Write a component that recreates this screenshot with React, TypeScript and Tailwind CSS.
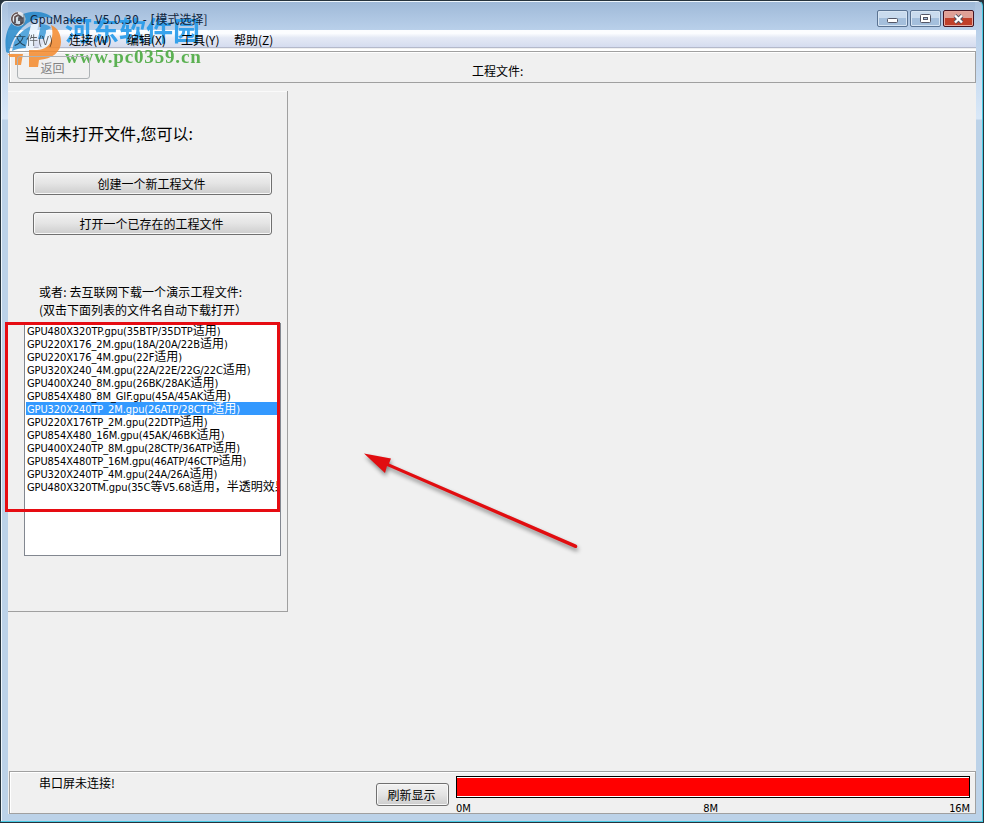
import React from "react";

const files = [
  "GPU480X320TP.gpu(35BTP/35DTP适用)",
  "GPU220X176_2M.gpu(18A/20A/22B适用)",
  "GPU220X176_4M.gpu(22F适用)",
  "GPU320X240_4M.gpu(22A/22E/22G/22C适用)",
  "GPU400X240_8M.gpu(26BK/28AK适用)",
  "GPU854X480_8M_GIF.gpu(45A/45AK适用)",
  "GPU320X240TP_2M.gpu(26ATP/28CTP适用)",
  "GPU220X176TP_2M.gpu(22DTP适用)",
  "GPU854X480_16M.gpu(45AK/46BK适用)",
  "GPU400X240TP_8M.gpu(28CTP/36ATP适用)",
  "GPU854X480TP_16M.gpu(46ATP/46CTP适用)",
  "GPU320X240TP_4M.gpu(24A/26A适用)",
  "GPU480X320TM.gpu(35C等V5.68适用，半透明效果)",
];

const menus = [
  { label: "文件(V)", width: "w-[55px]" },
  { label: "连接(W)", width: "w-[58px]" },
  { label: "编辑(X)", width: "w-[54px]" },
  { label: "工具(Y)", width: "w-[53px]" },
  { label: "帮助(Z)", width: "w-[50px]" },
];

// Latin runs are set narrower and smaller than the Chinese ones
const MixedText = ({ text }: { text: string }) => {
  const parts = text.match(/[\x00-\x7f]+|[^\x00-\x7f]+/g) || [];
  return (
    <>
      {parts.map((part, i) =>
        part.charCodeAt(0) < 128 ? (
          <span
            key={i}
            className="font-['DejaVu_Sans_Condensed','DejaVu_Sans',sans-serif] font-stretch-condensed text-[11px] tracking-[-0.1px]"
          >
            {part}
          </span>
        ) : (
          <span key={i}>{part}</span>
        )
      )}
    </>
  );
};

const PushButton = ({
  children,
  className = "border-[#707070]",
}: {
  children: React.ReactNode;
  className?: string;
}) => (
  <button
    className={`flex items-center justify-center rounded-[3px] border bg-linear-to-b from-[#f2f2f2] from-0% via-[#e4e4e4] via-50% to-[#cdcdcd] leading-none shadow-[inset_0_0_0_1px_#f8f8f8] ${className}`}
  >
    {children}
  </button>
);

const WindowButtons = () => (
  <div className="flex gap-[2px] pt-[8px]">
    <div className="flex h-[17px] w-[31px] items-center justify-center rounded-[2px] border border-[#5a7392] bg-linear-to-b from-[#c9dbee] from-50% to-[#a4bfdc] to-50% shadow-[inset_0_0_0_1px_#d7e5f3]">
      <svg width="12" height="6" viewBox="0 0 12 6" className="mt-[4px]">
        <rect x="0.5" y="0.5" width="10" height="4" rx="1" fill="#fff" stroke="#535666" />
      </svg>
    </div>
    <div className="flex h-[17px] w-[31px] items-center justify-center rounded-[2px] border border-[#5a7392] bg-linear-to-b from-[#c9dbee] from-50% to-[#a4bfdc] to-50% shadow-[inset_0_0_0_1px_#d7e5f3]">
      <svg width="11" height="9" viewBox="0 0 11 9">
        <rect x="0.5" y="0.5" width="10" height="8" rx="1" fill="#fff" stroke="#535666" />
        <rect x="3.5" y="3.5" width="4" height="2" fill="#a4bfdc" stroke="#535666" />
      </svg>
    </div>
    <div className="flex h-[17px] w-[31px] items-center justify-center rounded-[2px] border border-[#431422] bg-linear-to-b from-[#dfa096] from-50% to-[#c0402a] to-50% shadow-[inset_0_0_0_1px_#e5a79d]">
      <svg width="13" height="10" viewBox="0 0 13 10">
        <path d="M3 1.5l7 7M10 1.5l-7 7" stroke="#535666" strokeWidth="4" />
        <path d="M3 1.5l7 7M10 1.5l-7 7" stroke="#fff" strokeWidth="2.4" />
      </svg>
    </div>
  </div>
);

const Watermark = () => (
  <div className="pointer-events-none absolute top-[10px] left-[4px] flex">
    <svg width="60" height="60" viewBox="0 0 60 60" className="opacity-85">
      <path
        d="M2 41C-1 20 9 4 27 2c11-1 18 2 23 7-5-2-11-2-15-1C22 11 9 24 5 43c-2 0-3-1-3-2z"
        fill="#2488ca"
      />
      <path d="M10 32c4-8 10-13 17-16l-5 22c-5 0-10 1-14 3z" fill="#3c9ad8" />
      <path d="M37 14c4 0 8 1 10 4l-4 2-3 9h-6z" fill="#3c9ad8" />
      <path d="M27 15l8-3-6 29h-8zM42 20c6 1 8 7 6 13-2 5-7 8-14 8l1-5c5 0 7-8 7-16z" fill="#eef7ff" />
      <path
        d="M47 15c7 3 10 9 10 17 0 10-9 17-22 18l-1 7h-9V40h8c8 0 14-5 15-13 1-5 0-9-1-12z"
        fill="#f58a2c"
      />
      <path d="M4 44h15l-2 11h-6v-8H6z" fill="#f58a2c" />
    </svg>
    <div className="flex flex-col pl-[1px] whitespace-nowrap opacity-90">
      <span className="h-[37px] pt-[3px] text-[27px] leading-[34px] font-bold text-[#249aea]">
        河东软件园
      </span>
      <span className="font-['Liberation_Serif',serif] text-[19px] leading-[20px] font-bold tracking-[0.85px] text-[#4dab43]">
        www.pc0359.cn
      </span>
    </div>
  </div>
);

const TitleBar = () => (
  <header className="flex h-[28px] justify-between bg-linear-to-b from-[#9fb9d8] to-[#b9d0ea] pr-px">
    <div className="relative z-10 flex pt-[9px] pl-[2px]">
      <svg width="17" height="17" viewBox="0 0 17 17" className="opacity-80">
        <circle cx="8" cy="8" r="7.5" fill="#f4efec" />
        <path d="M8 2a6 6 0 1 0 5 9V7H9v3M5 12V6l3-2 3 2v7" fill="none" stroke="#50352f" strokeWidth="1.7" />
        <path d="M14 3v11" stroke="#777" />
      </svg>
      <h1 className="-mt-px ml-[3px] text-[12.5px] leading-[18px] whitespace-nowrap text-[#10243c]">
        <span className="font-['DejaVu_Sans_Condensed','DejaVu_Sans',sans-serif] font-stretch-condensed text-[12px] tracking-[0.33px]">
          GpuMaker&nbsp; V5.0.30 - [
        </span>
        <span className="text-[12px]">模式选择]</span>
      </h1>
    </div>
    <WindowButtons />
  </header>
);

const FilePanel = () => (
  <section className="mt-[8px] h-[521px] w-[280px] border-r border-b border-[#a0a0a0] shadow-[inset_0_1px_#fafafa]">
    <h2 className="pt-[30px] pl-[16px] text-[16px] leading-[24px]">
      当前未打开文件,您可以:
    </h2>
    <div className="flex flex-col gap-[17px] pt-[27px] pl-[25px]">
      <PushButton className="h-[23px] w-[239px] border-[#707070] pr-[2px]">创建一个新工程文件</PushButton>
      <PushButton className="h-[23px] w-[239px] border-[#707070] pr-[2px]">打开一个已存在的工程文件</PushButton>
    </div>
    <div className="pt-[48px] pl-[31px] leading-[18px] whitespace-nowrap">
      <p className="tracking-[0.1px]">或者: 去互联网下载一个演示工程文件:</p>
      <p>(双击下面列表的文件名自动下载打开）</p>
    </div>
    <div className="relative mt-[4px] ml-[16px] h-[233px] w-[257px] border border-[#828790] bg-white">
      <ul className="mr-[3px] h-full overflow-hidden pl-[1px]">
        {files.map((file, i) => (
          <li
            key={file}
            className={`h-[13px] pl-[1px] leading-[11px] whitespace-nowrap ${
              i === 6 ? "bg-[#3399ff] text-white" : ""
            }`}
          >
            <MixedText text={file} />
          </li>
        ))}
      </ul>
      <div className="absolute -top-[2px] -left-[20px] h-[190px] w-[275px] border-3 border-[#e60c12]" />
    </div>
  </section>
);

const Arrow = () => (
  <svg
    className="absolute top-[445px] left-[355px] drop-shadow-[1px_3px_2px_rgba(0,0,0,0.45)]"
    width="235"
    height="115"
    viewBox="0 0 235 115"
  >
    <path d="M9 8.500l27 5-2 5 187 81q2 1 1 3-1 1-3 0L32 21l-2 7z" fill="#e10d10" />
  </svg>
);

const StatusBar = () => (
  <footer className="mt-auto ml-[1px] flex h-[43px] border border-[#a0a0a0] shadow-[inset_1px_1px_#fff]">
    <p className="w-[366px] pt-[2px] pl-[29px] leading-[18px]">串口屏未连接!</p>
    <PushButton className="mt-[11px] h-[23px] w-[73px] border-[#707070] pr-[2px]">刷新显示</PushButton>
    <div className="ml-[7px] w-[514px] pt-[4px]">
      <div className="h-[22px] border border-black bg-white py-px">
        <div className="h-full bg-[#ff0000]" />
      </div>
      <div className="flex justify-between pt-[2px] leading-[13px]">
        <span className="w-[30px]"><MixedText text="0M" /></span>
        <span className="pr-[14px]"><MixedText text="8M" /></span>
        <span><MixedText text="16M" /></span>
      </div>
    </div>
  </footer>
);

const App = () => {
  return (
    <div className="relative isolate h-[823px] w-[984px] overflow-hidden bg-[#26333d] font-['Noto_Sans_CJK_SC',sans-serif] text-[12px] text-black">
      <main className="flex h-[822px] w-[983px] flex-col rounded-t-[6px] border-t border-r border-b border-l border-t-[#26333d] border-r-[#48cbe4] border-b-[#48cbe4] border-l-[#26333d] bg-linear-[180deg,#a8c0dc_0px,#b9d0ea_30px,#d9e8f8_118px,#bcd2e8_119px] px-[7px] pt-px pb-[7px] shadow-[inset_1px_1px_#eef6fc]">
        <TitleBar />
        <div className="flex min-h-0 w-[968px] flex-1 flex-col bg-[#f0f0f0]">
          <nav className="flex h-[18px] border-b border-[#b4b9cb] bg-linear-to-b from-[#fcfdff] from-20% via-[#e4e9f5] via-45% to-[#d5dcef] pl-[6px] leading-[19px] whitespace-nowrap">
            {menus.map((menu) => (
              <span key={menu.label} className={`relative z-10 first:opacity-60 ${menu.width}`}>
                {menu.label}
              </span>
            ))}
          </nav>
          <div className="mt-[3px] ml-[1px] flex h-[32px] border border-[#a0a0a0] shadow-[inset_1px_1px_#fff,0_-2px_#fff]">
            <PushButton className="relative z-10 mt-[4px] ml-[7px] h-[23px] w-[73px] border-[#adb2b5] bg-none pr-[2px] text-[#838383] shadow-none">
              返回
            </PushButton>
            <p className="ml-[382px] pt-[10px] leading-[18px]">工程文件:</p>
          </div>
          <FilePanel />
          <StatusBar />
        </div>
      </main>
      <Arrow />
      <Watermark />
    </div>
  );
};

export default App;
